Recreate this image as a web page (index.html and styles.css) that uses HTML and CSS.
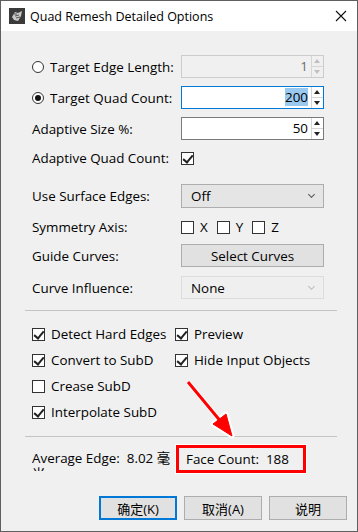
FILE: index.html
```html
<!DOCTYPE html>
<html lang="en">
<head>
  <meta charset="UTF-8" />
  <title>Quad Remesh Detailed Options</title>
  <link rel="stylesheet" href="styles.css">
</head>
<body>
  <div class="window">
    <!-- barra de titulo -->
    <div class="titlebar">
      <svg class="app-icon" viewBox="0 0 16 16">
        <rect x="0" y="0" width="16" height="16" fill="#3a3a3a"/>
        <path d="M3 9 L6 4 L9 5 L13 3 L12 8 L9 13 L5 12 Z" fill="#c9c9c9"/>
        <path d="M5 6 L8 6 M6 8 L10 7 M7 10 L11 9" stroke="#555" stroke-width="1"/>
      </svg>
      <span class="title">Quad Remesh Detailed Options</span>
      <svg class="close" viewBox="0 0 12 12">
        <path d="M1 1 L11 11 M11 1 L1 11" stroke="#111" stroke-width="1.1"/>
      </svg>
    </div>

    <div class="content">
      <div class="form">
        <div class="row">
          <label class="lbl"><span class="radio"></span>Target Edge Length:</label>
          <div class="spin disabled">
            <span class="val">1</span>
            <span class="spin-btns"><span class="up"></span><span class="down"></span></span>
          </div>
        </div>
        <div class="row gap8">
          <label class="lbl"><span class="radio on"></span>Target Quad Count:</label>
          <div class="spin focus">
            <span class="val"><span class="sel">200</span></span>
            <span class="spin-btns"><span class="up"></span><span class="down"></span></span>
          </div>
        </div>
        <div class="row gap8">
          <label class="lbl">Adaptive Size %:</label>
          <div class="spin">
            <span class="val">50</span>
            <span class="spin-btns"><span class="up"></span><span class="down"></span></span>
          </div>
        </div>
        <div class="row gap7 short">
          <label class="lbl">Adaptive Quad Count:</label>
          <span class="check on"></span>
        </div>
        <div class="row gap15 tall">
          <label class="lbl">Use Surface Edges:</label>
          <div class="combo"><span>Off</span><span class="chev"></span></div>
        </div>
        <div class="row gap8 short">
          <label class="lbl">Symmetry Axis:</label>
          <div class="axes">
            <span class="axis"><span class="check"></span>X</span>
            <span class="axis"><span class="check"></span>Y</span>
            <span class="axis"><span class="check"></span>Z</span>
          </div>
        </div>
        <div class="row gap6">
          <label class="lbl">Guide Curves:</label>
          <button class="btn wide">Select Curves</button>
        </div>
        <div class="row gap9">
          <label class="lbl">Curve Influence:</label>
          <div class="combo disabled"><span>None</span><span class="chev"></span></div>
        </div>
      </div>

      <div class="sep first"></div>

      <div class="options">
        <label class="opt"><span class="check on"></span>Detect Hard Edges</label>
        <label class="opt"><span class="check on"></span>Preview</label>
        <label class="opt"><span class="check on"></span>Convert to SubD</label>
        <label class="opt"><span class="check on"></span>Hide Input Objects</label>
        <label class="opt"><span class="check"></span>Crease SubD</label>
        <span></span>
        <label class="opt"><span class="check on"></span>Interpolate SubD</label>
      </div>

      <div class="sep second"></div>

      <div class="info">
        <div class="avg">Average Edge:&nbsp; 8.02 毫米</div>
        <div class="faces">Face Count:&nbsp; 188</div>
      </div>

      <div class="buttons">
        <button class="btn dlg default">确定(K)</button>
        <button class="btn dlg">取消(A)</button>
        <button class="btn dlg">说明</button>
      </div>
    </div>

    <!-- flecha roja de anotacion -->
    <svg class="arrow" width="358" height="532" viewBox="0 0 358 532">
      <g stroke="#fff" stroke-width="5" fill="#fff" stroke-linejoin="round">
        <line x1="188" y1="382" x2="222" y2="423"/>
        <path d="M232 436 L213 424 L226 414 Z"/>
      </g>
      <g stroke="#f00" stroke-width="3" fill="#f00">
        <line x1="188" y1="382" x2="222" y2="423"/>
        <path d="M232 436 L213 424 L226 414 Z" stroke-width="1"/>
      </g>
    </svg>
  </div>
</body>
</html>
```

FILE: styles.css
```css
* {
  box-sizing: border-box;
  margin: 0;
  padding: 0;
}

body {
  font-family: 'Open Sans', 'Noto Sans CJK SC', sans-serif;
  font-size: 13.4px;
  color: #000;
  background: #f0f0f0;
}

.window {
  position: relative;
  width: 358px;
  height: 532px;
  border: 1px solid #5f5f5f;
  background: #f0f0f0;
  overflow: hidden;
}

/* --- BARRA DE TITULO --- */
.titlebar {
  height: 30px;
  background: #fff;
  display: flex;
  align-items: center;
  padding-left: 8px;
  padding-right: 10px;
}
.app-icon {
  width: 16px;
  height: 16px;
  margin-right: 5px;
}
.title {
  font-size: 12.5px;
  flex: 1;
}
.close {
  width: 12px;
  height: 12px;
}

/* --- CONTENIDO --- */
.content {
  padding: 24px 10px 0 31px;
}

.row {
  display: flex;
  align-items: center;
  height: 23px;
}
.row.short { height: 22px; }
.row.tall { height: 24px; }
.gap6 { margin-top: 6px; }
.gap7 { margin-top: 7px; }
.gap8 { margin-top: 8px; }
.gap9 { margin-top: 9px; }
.gap15 { margin-top: 15px; }

.lbl {
  width: 149px;
  display: flex;
  align-items: center;
}

.radio {
  width: 12px;
  height: 12px;
  border: 1px solid #333;
  border-radius: 50%;
  background: #fff;
  margin-right: 6px;
  position: relative;
}
.radio.on::after {
  content: '';
  position: absolute;
  left: 2px;
  top: 2px;
  width: 6px;
  height: 6px;
  border-radius: 50%;
  background: #111;
}

.spin {
  width: 143px;
  height: 23px;
  display: flex;
  border: 1px solid #7a7a7a;
  background: #fff;
}
.spin.focus { border-color: #0078d7; }
.spin.disabled {
  border-color: #cccccc;
  background: #f0f0f0;
  color: #6d6d6d;
}
.spin .val {
  flex: 1;
  text-align: right;
  padding-right: 3px;
  line-height: 21px;
}
.sel {
  background: #99c9ef;
}
.spin-btns {
  width: 12px;
  display: flex;
  flex-direction: column;
  border-left: 1px solid #d6d6d6;
}
.spin-btns span {
  flex: 1;
  position: relative;
}
.spin-btns .up {
  border-bottom: 1px solid #d6d6d6;
}
.spin-btns .up::after,
.spin-btns .down::after {
  content: '';
  position: absolute;
  left: 2px;
  border-left: 3.5px solid transparent;
  border-right: 3.5px solid transparent;
}
.spin-btns .up::after {
  top: 3px;
  border-bottom: 4px solid #222;
}
.spin-btns .down::after {
  top: 3px;
  border-top: 4px solid #222;
}
.spin.disabled .up::after { border-bottom-color: #bfbfbf; }
.spin.disabled .down::after { border-top-color: #bfbfbf; }

.check {
  width: 13px;
  height: 13px;
  border: 1px solid #333;
  background: #fff;
  position: relative;
  flex-shrink: 0;
}
.check.on::after {
  content: '';
  position: absolute;
  left: 3px;
  top: 0px;
  width: 4px;
  height: 8px;
  border-right: 2px solid #222;
  border-bottom: 2px solid #222;
  transform: rotate(40deg);
}

.combo {
  width: 143px;
  height: 24px;
  border: 1px solid #adadad;
  background: #e5e5e5;
  display: flex;
  align-items: center;
  justify-content: space-between;
  padding: 0 9px 0 9px;
}
.combo.disabled {
  background: #efefef;
  border-color: #dcdcdc;
  height: 23px;
}
.chev {
  width: 5px;
  height: 5px;
  border-right: 1px solid #555;
  border-bottom: 1px solid #555;
  transform: rotate(45deg);
  margin-top: -3px;
}
.combo.disabled .chev {
  border-color: #bdbdbd;
}

.axes {
  display: flex;
  gap: 9px;
}
.axis {
  display: flex;
  align-items: center;
  gap: 6px;
}

.btn {
  font-family: inherit;
  font-size: 13.4px;
  background: #e1e1e1;
  border: 1px solid #adadad;
  color: #000;
}
.btn.wide {
  width: 143px;
  height: 23px;
}

.sep {
  height: 1px;
  background: #c4c4c4;
  margin-left: -7px;
  margin-right: 10px;
}
.sep.first { margin-top: 11px; }
.sep.second { margin-top: 11px; }

.options {
  display: grid;
  grid-template-columns: 143px 1fr;
  grid-auto-rows: 26px;
  padding-top: 10px;
}
.opt {
  display: flex;
  align-items: center;
  gap: 6px;
  height: 26px;
}

.info {
  display: flex;
  align-items: flex-start;
  margin-top: 8px;
  height: 28px;
}
.avg {
  width: 143px;
  height: 26px;
  line-height: 16px;
  padding-top: 5px;
  overflow: hidden;
}
.faces {
  margin-left: 1px;
  width: 130px;
  height: 28px;
  border: 3px solid #f00;
  outline: 1px solid #fff;
  padding-left: 7px;
  line-height: 22px;
}

.buttons {
  display: flex;
  justify-content: flex-end;
  gap: 7px;
  margin-top: 23px;
}
.btn.dlg {
  width: 78px;
  height: 24px;
  font-size: 13px;
}
.btn.default {
  border: 2px solid #0078d7;
}

.arrow {
  position: absolute;
  left: -1px;
  top: -1px;
  pointer-events: none;
}
```
